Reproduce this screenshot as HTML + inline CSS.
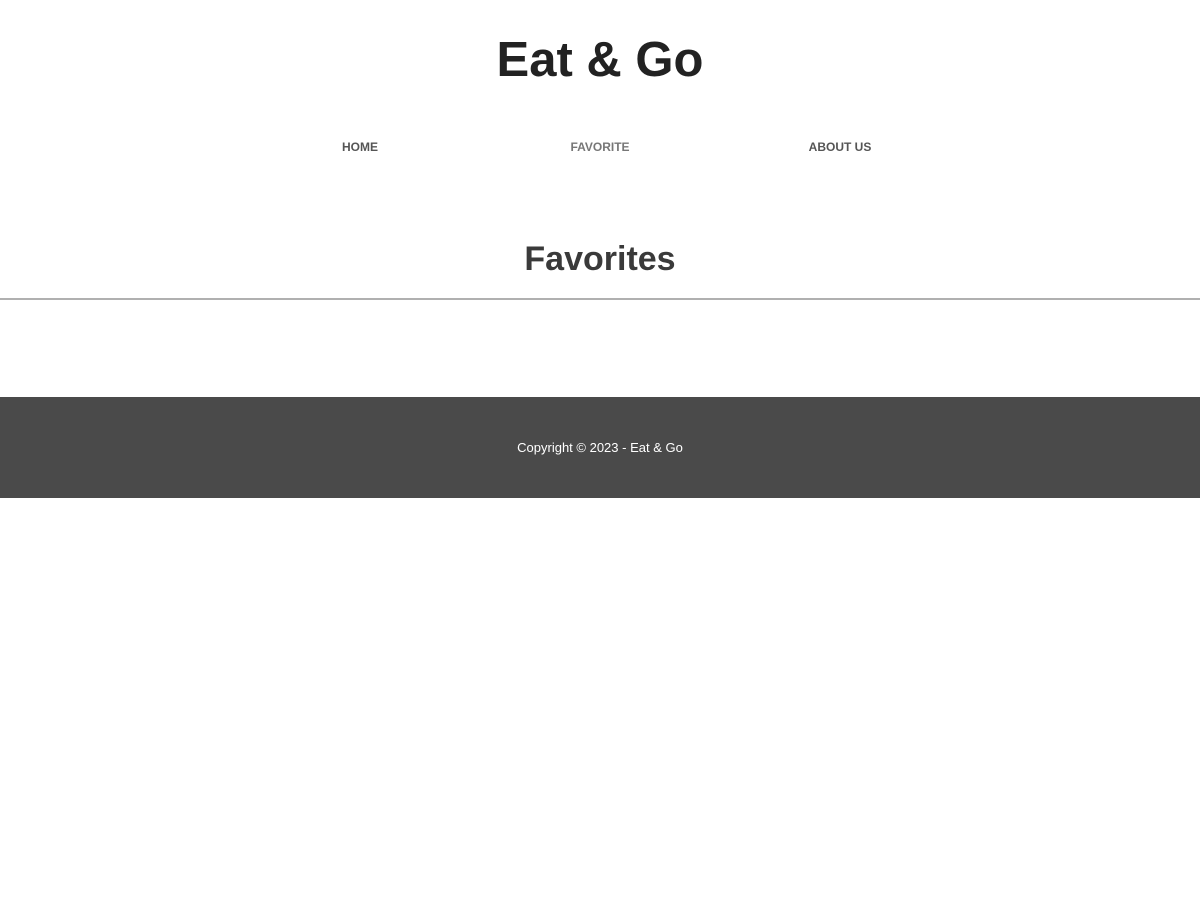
<!DOCTYPE html>
<html><head><meta charset="utf-8"><style>
body{margin:0;background:#fff;font-family:"Liberation Sans",sans-serif;}
h1{margin:0;position:absolute;top:30px;left:0;width:1200px;text-align:center;font-size:49px;font-weight:600;color:#222;line-height:60px;}
.nav a{position:absolute;top:140px;font-size:12px;font-weight:bold;color:#555;text-decoration:none;transform:translateX(-50%);}
h2{margin:0;position:absolute;top:238px;width:1200px;text-align:center;font-size:34px;font-weight:bold;color:#3a3a3a;line-height:42px;}
.hr{position:absolute;top:298px;left:0;width:1200px;height:2px;background:#b0b0b0;}
footer{position:absolute;top:397px;left:0;width:1200px;height:101px;background:#4a4a4a;color:#fff;font-size:13px;text-align:center;line-height:101px;}
</style></head><body>
<h1>Eat &amp; Go</h1>
<div class="nav"><a style="left:360px">HOME</a><a style="left:600px;color:#777">FAVORITE</a><a style="left:840px">ABOUT US</a></div>
<h2>Favorites</h2>
<div class="hr"></div>
<footer>Copyright © 2023 - Eat &amp; Go</footer>
</body></html>
